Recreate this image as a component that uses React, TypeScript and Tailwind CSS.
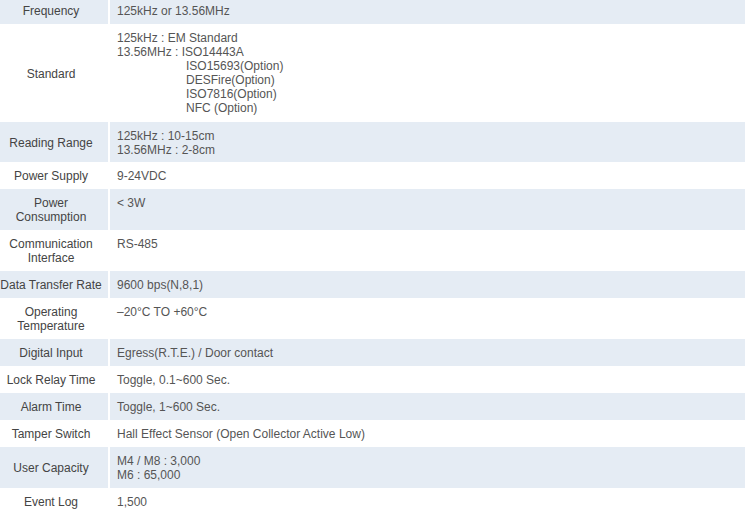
import React from "react";

type RowProps = {
  label: React.ReactNode;
  value: React.ReactNode;
  shaded: boolean;
  extra?: string;
};

function Row({ label, value, shaded, extra = "" }: RowProps) {
  const bg = shaded ? "bg-[#e5ecf4]" : "bg-white";
  return (
    <div className={`flex w-full shrink-0 overflow-hidden ${extra}`}>
      <div
        className={`w-[108px] shrink-0 pr-[6px] pt-[7px] pb-[6px] flex items-center justify-center text-center text-[#444] ${bg}`}
      >
        <div>{label}</div>
      </div>
      <div className="w-[2px] shrink-0 bg-white" />
      <div className={`flex-1 pl-[7px] pt-[7px] pb-[6px] text-[#555] ${bg}`}>{value}</div>
    </div>
  );
}

export default function App() {
  const ind = "pl-[69px]";
  return (
    <div
      className="w-[745px] h-[512px] overflow-hidden bg-white text-[12px] leading-[14px]"
      style={{ fontFamily: '"Liberation Sans", Arial, sans-serif' }}
    >
      <div className="-mt-[3px] flex flex-col">
        <Row shaded label="Frequency" value="125kHz or 13.56MHz" />
        <Row
          shaded={false}
          extra="h-[98px]"
          label="Standard"
          value={
            <div>
              <div>125kHz : EM Standard</div>
              <div>13.56MHz : ISO14443A</div>
              <div className={ind}>ISO15693(Option)</div>
              <div className={ind}>DESFire(Option)</div>
              <div className={ind}>ISO7816(Option)</div>
              <div className={ind}>NFC (Option)</div>
            </div>
          }
        />
        <Row
          shaded
          extra="h-[40px]"
          label="Reading Range"
          value={
            <div>
              <div>125kHz : 10-15cm</div>
              <div>13.56MHz : 2-8cm</div>
            </div>
          }
        />
        <Row shaded={false} label="Power Supply" value="9-24VDC" />
        <Row
          shaded
          label={
            <>
              Power
              <br />
              Consumption
            </>
          }
          value="< 3W"
        />
        <Row
          shaded={false}
          label={
            <>
              Communication
              <br />
              Interface
            </>
          }
          value="RS-485"
        />
        <Row
          shaded
          label={<span className="whitespace-nowrap">Data Transfer Rate</span>}
          value="9600 bps(N,8,1)"
        />
        <Row
          shaded={false}
          label={
            <>
              Operating
              <br />
              Temperature
            </>
          }
          value="–20°C TO +60°C"
        />
        <Row shaded label="Digital Input" value="Egress(R.T.E.) / Door contact" />
        <Row shaded={false} label="Lock Relay Time" value="Toggle, 0.1~600 Sec." />
        <Row shaded label="Alarm Time" value="Toggle, 1~600 Sec." />
        <Row
          shaded={false}
          label="Tamper Switch"
          value="Hall Effect Sensor (Open Collector Active Low)"
        />
        <Row
          shaded
          label="User Capacity"
          value={
            <div>
              <div>M4 / M8 : 3,000</div>
              <div>M6 : 65,000</div>
            </div>
          }
        />
        <Row shaded={false} label="Event Log" value="1,500" />
      </div>
    </div>
  );
}
